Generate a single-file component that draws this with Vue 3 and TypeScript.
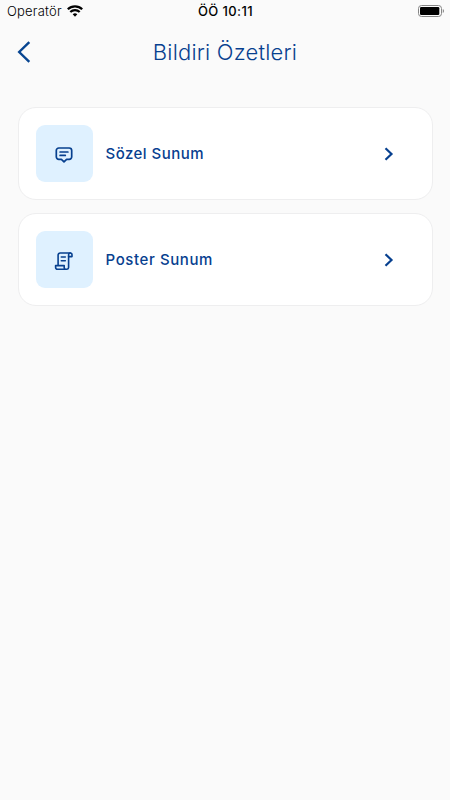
<script setup lang="ts">
interface Entry {
  id: string
  label: string
  icon: 'speech' | 'scroll'
}

const entries: Entry[] = [
  { id: 'oral', label: 'Sözel Sunum', icon: 'speech' },
  { id: 'poster', label: 'Poster Sunum', icon: 'scroll' },
]
</script>

<template>
  <div class="screen">
    <div class="status">
      <div class="carrier">
        <span class="carrier-name">Operatör</span>
        <svg class="wifi" width="16" height="12" viewBox="0 0 16 12" fill="none" stroke="#000" stroke-width="2.2">
          <path d="M.8 4.3a10.2 10.2 0 0 1 14.4 0" />
          <path d="M3.3 7a6.6 6.6 0 0 1 9.4 0" />
          <path d="M8 11.7 5.7 9.3a3.3 3.3 0 0 1 4.6 0Z" fill="#000" stroke="none" />
        </svg>
      </div>
      <span class="time">ÖÖ 10:11</span>
      <svg class="battery" width="26" height="12" viewBox="0 0 26 12">
        <rect x=".5" y=".5" width="23" height="11" rx="3" fill="none" stroke="#858585" />
        <rect x="2" y="2" width="19.3" height="8" rx="1.2" fill="#000" />
        <path d="M24.8 4v4c.7-.4 1.1-1.1 1.1-2s-.4-1.6-1.1-2Z" fill="#777" />
      </svg>
    </div>

    <header class="header">
      <button class="back" type="button" aria-label="Geri">
        <svg width="14" height="22" viewBox="0 0 14 22" fill="none" stroke="#074591" stroke-width="2.4">
          <path d="M12.3 1.2 2.2 11l10.1 9.8" />
        </svg>
      </button>
      <h1 class="title">Bildiri Özetleri</h1>
    </header>

    <main class="list">
      <button v-for="entry in entries" :key="entry.id" class="card" type="button">
        <span class="tile">
          <svg v-if="entry.icon === 'speech'" class="glyph" width="20" height="20" viewBox="0 0 20 20" fill="none" stroke="#07408f" stroke-width="1.7" stroke-linejoin="round" stroke-linecap="round">
            <path d="M4.8 3h10.4a2.5 2.5 0 0 1 2.5 2.5v6.3a2.5 2.5 0 0 1-2.5 2.5h-2.6L10 16.9l-2.6-2.6H4.8a2.5 2.5 0 0 1-2.5-2.5V5.5A2.500 2.500 0 0 1 4.800 3Z" />
            <path d="M6.100 7h7.800M6.100 10.400h5.200" />
          </svg>
          <svg v-else class="glyph" width="20" height="20" viewBox="0 0 20 20" fill="none" stroke="#07408f" stroke-width="1.600" stroke-linejoin="round" stroke-linecap="round">
            <path d="M16.300 2H6.100a2 2 0 0 0-2 2V14.600M14.600 5.600V16.600a1.600 1.600 0 0 1-1.600 1.600H3.600a2 2 0 0 1-2-2v-1.600h8.600v1.900a1.700 1.700 0 0 0 1.700 1.700h1.100" />
            <path d="M16.300 2a1.700 1.700 0 0 1 1.700 1.700V5.600h-3.400V3.700A1.700 1.700 0 0 1 16.300 2Z" />
            <path d="M7.300 6h4M7.300 9.700h4" />
          </svg>
        </span>
        <span :class="['label', entry.icon]">{{ entry.label }}</span>
        <svg class="chevron" width="10" height="14" viewBox="0 0 10 14" fill="none" stroke="#07408f" stroke-width="2.200">
          <path d="m1.500 1.200 6 5.800-6 5.800" />
        </svg>
      </button>
    </main>
  </div>
</template>

<style>
body {
  background: #fafafa;
}
</style>

<style scoped>
.screen {
  box-sizing: border-box;
  width: 100%;
  min-height: 800px;
  background: #fafafa;
  font-family: Inter, "Liberation Sans", sans-serif;
}
.status {
  display: grid;
  grid-template-columns: 1fr auto 1fr;
  align-items: center;
  height: 22px;
  padding: 0 6px 0 7px;
  color: #000;
}
.carrier {
  display: flex;
  align-items: center;
  gap: 5px;
}
.carrier-name {
  font-size: 13px;
  line-height: 22px;
  font-weight: 300;
  letter-spacing: 0.2px;
}
.time {
  font-size: 13px;
  line-height: 22px;
  font-weight: 500;
  letter-spacing: 0.4px;
}
.battery {
  justify-self: end;
}
.header {
  display: grid;
  grid-template-columns: 31px 1fr 31px;
  align-items: center;
  height: 60px;
}
.back {
  display: flex;
  justify-content: flex-end;
  padding: 0;
  border: 0;
  background: none;
}
.title {
  margin: 0;
  text-align: center;
  color: #07408f;
  font-size: 22px;
  line-height: 32px;
  font-weight: 300;
  letter-spacing: 0.2px;
}
.list {
  display: flex;
  flex-direction: column;
  gap: 13px;
  padding: 25px 17.500px 0;
}
.card {
  box-sizing: border-box;
  display: flex;
  align-items: center;
  height: 93px;
  padding: 0 38px 0 17.500px;
  border: 1px solid #eeeeef;
  border-radius: 18px;
  background: #fff;
  font-family: inherit;
  text-align: left;
}
.tile {
  display: flex;
  align-items: center;
  justify-content: center;
  width: 56.500px;
  height: 56.500px;
  border-radius: 9px;
  background: #dff1ff;
}
.glyph {
  margin-top: 2px;
}
.label {
  flex: 1;
  margin-left: 13px;
  color: #07408f;
  font-size: 15px;
  font-weight: 500;
  line-height: 22px;
  letter-spacing: 0.47px;
}
.label.scroll {
  letter-spacing: 0.6px;
}
</style>
